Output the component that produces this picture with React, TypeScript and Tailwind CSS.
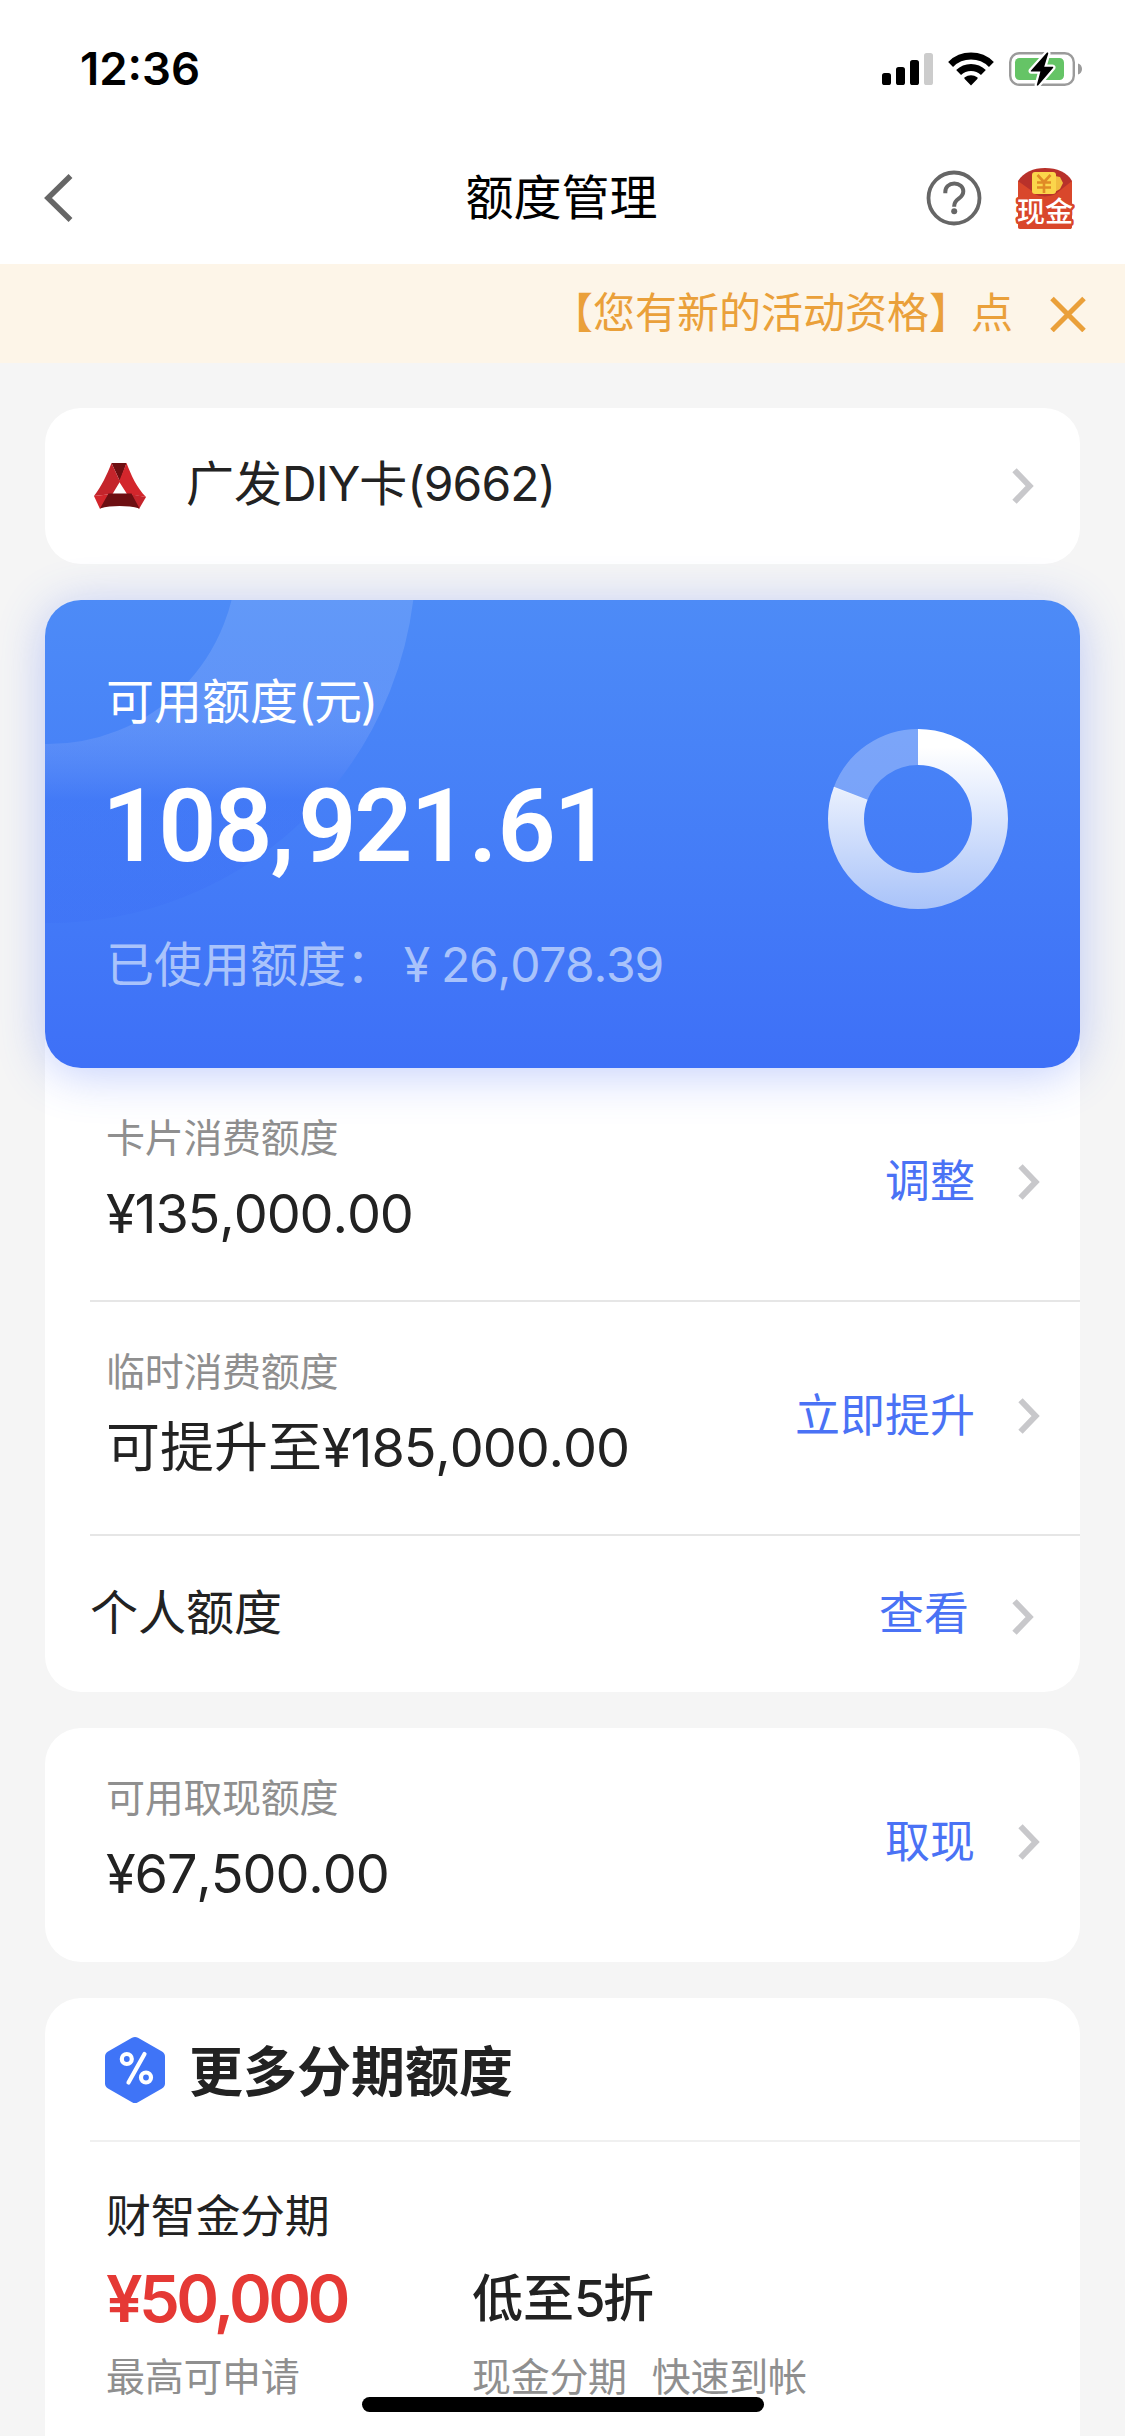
import type { ReactNode } from "react";

type LimitRowProps = {
  label: string;
  value: ReactNode;
  action: string;
  divider?: boolean;
};

const installment = {
  name: "财智金分期",
  amount: "¥50,000",
  amountNote: "最高可申请",
  rateNotes: ["现金分期", "快速到帐"]
};

function SignalIcon() {
  return (
    <svg width="51" height="32" viewBox="0 0 51 32">
      <rect x="0" y="20" width="9" height="12" rx="2.6" />
      <rect x="14" y="14" width="9" height="18" rx="2.6" />
      <rect x="28" y="7" width="9" height="25" rx="2.6" />
      <rect x="42" y="0" width="9" height="32" rx="2.6" fill="#cccccc" />
    </svg>
  );
}

function WifiIcon() {
  return (
    <svg width="46" height="34" viewBox="0 0 46 34">
      <g fill="none" stroke="#000" strokeWidth="7">
        <path d="M2.6 12.4a29.2 29.2 0 0 1 40.8 0" />
        <path d="M10.6 20.6a17.8 17.8 0 0 1 24.8 0" />
      </g>
      <path d="M23 33.4l-6.3-6.5c-.5-.6-.5-1.2.1-1.6a10 10 0 0 1 12.4 0c.6.4.6 1 .1 1.6z" />
    </svg>
  );
}

function BatteryIcon() {
  return (
    <svg width="74" height="36" viewBox="0 0 74 36">
      <rect x="1.2" y="2.2" width="63.6" height="31.6" rx="9" fill="none" stroke="#9b9b9b" strokeWidth="2.4" />
      <path d="M69 12.5c2.6.8 4 2.9 4 5.5s-1.4 4.7-4 5.5z" fill="#9b9b9b" />
      <rect x="6" y="7" width="49" height="22" rx="4.5" fill="#65c466" />
      <path
        d="M37.8 1.8L22 19.4c-.5.7-.2 1.2.5 1.2h8.9l-3.5 13c-.3 1.3.6 1.5 1.4.7L44 17.1c.6-.7.3-1.3-.5-1.3h-8.3l4-13c.3-1.3-.6-1.8-1.4-1z"
        stroke="#fff"
        strokeWidth="4.5"
        paintOrder="stroke"
      />
    </svg>
  );
}

function HelpIcon() {
  return (
    <svg width="56" height="56" viewBox="0 0 56 56" fill="none" stroke="#666666">
      <circle cx="28" cy="28" r="25.5" strokeWidth="3.8" />
      <path
        d="M19.3 23.2v-1.3c0-5 3.7-8.3 9-8.3 5.2 0 9 3.2 9 7.7 0 3.3-1.6 5.2-4.6 7.4-3.3 2.4-4.5 4-4.5 7.3v.8"
        strokeWidth="4"
      />
      <circle cx="28.2" cy="41.3" r="3" fill="#666666" stroke="none" />
    </svg>
  );
}

function CashIcon() {
  return (
    <svg width="60" height="62" viewBox="0 0 60 62">
      <path d="M3 14C9 5 18 1 30 1s22 4 27 13v22H3z" fill="#b8312a" />
      <path d="M40 9l5 1 3 6-3 6-7 4z" fill="#f2bd3f" />
      <path d="M3 14l14 10c3 7 21 7 26 1l14-11v46c0 1.5-1 2-2 2H5c-1.5 0-2-1-2-2z" fill="#d9472b" />
      <rect x="17" y="5" width="24" height="22" rx="3" fill="#fbd54b" />
      <path d="M22.5 8l6.5 7 6.5-7M29 15v11M22 15.5h14M22 20.5h14" fill="none" stroke="#e08a26" strokeWidth="2.6" />
      <text
        x="30"
        y="54.5"
        textAnchor="middle"
        className="font-['Noto_Sans_CJK_SC',sans-serif] text-[28px] font-medium"
        fill="#fff"
        stroke="#d9472b"
        strokeWidth="5"
        strokeLinejoin="round"
        paintOrder="stroke"
      >
        现金
      </text>
    </svg>
  );
}

function BankLogo() {
  return (
    <svg width="54" height="46" viewBox="0 0 54 46">
      <path d="M18.5 0h15L27 18.5z" fill="#6d0f12" />
      <path d="M18.5 0L27 18.5 19.5 31 1 33C8 24 14 12 18.5 0z" fill="#c4242b" />
      <path d="M33.5 0L26 18.5 34 31 53 34C44 25 38 12 33.5 0z" fill="#d3262c" />
      <path d="M1 33l18.5-2L7 46z" fill="#d3262c" />
      <path d="M33.5 30.5L53 34l-7 12z" fill="#c4242b" />
      <path d="M15.5 30.5h23L46.5 45.5C34 42.3 19 42.3 7 45.5z" fill="#6d0f12" />
    </svg>
  );
}

function PercentBadge() {
  return (
    <svg width="60" height="68" viewBox="0 0 60 68">
      <path
        d="M27 1.8q3-1.7 6 0l24 13.7q3 1.7 3 5.2v26.6q0 3.5-3 5.2L33 66.2q-3 1.7-6 0L3 52.5q-3-1.7-3-5.2V20.7q0-3.5 3-5.2z"
        fill="#3f74f7"
      />
      <g fill="none" stroke="#fff" strokeWidth="4.2">
        <circle cx="21.8" cy="23" r="5" />
        <circle cx="41" cy="41.5" r="5" />
        <path d="M39.5 18L23.5 46.5" strokeLinecap="round" />
      </g>
    </svg>
  );
}

function ChevronRight() {
  return (
    <svg width="22" height="36" viewBox="0 0 22 36" fill="none" className="shrink-0">
      <path d="M2.5 2.2L17.6 18 2.5 33.8" stroke="#c8c8cb" strokeWidth="6" />
    </svg>
  );
}

// Share of the limit that is still free, clockwise from 12 o'clock.
function LimitDonut({ free }: { free: number }) {
  const length = 2 * Math.PI * 72;
  return (
    <svg width="180" height="180" viewBox="0 0 180 180" fill="none">
      <defs>
        <linearGradient id="donut" gradientUnits="userSpaceOnUse" x1="0" y1="0" x2="0" y2="180">
          <stop offset="0.1" stopColor="#ffffff" />
          <stop offset="1" stopColor="#a9c3f9" />
        </linearGradient>
      </defs>
      <path
        d="M90 18a72 72 0 0 1 0 144a72 72 0 0 1 0-144"
        stroke="url(#donut)"
        strokeWidth="36"
        strokeDasharray={`${length * free} ${length}`}
      />
      <path
        d="M90 18a72 72 0 0 0 0 144a72 72 0 0 0 0-144"
        stroke="#ffffff"
        strokeOpacity="0.28"
        strokeWidth="36"
        strokeDasharray={`${length * (1 - free)} ${length}`}
      />
    </svg>
  );
}

function CardRings() {
  return (
    <svg width="420" height="468" viewBox="0 0 420 468" fill="none" className="absolute top-0 left-0">
      <defs>
        <linearGradient id="rings" gradientUnits="userSpaceOnUse" x1="0" y1="0" x2="0" y2="323">
          <stop offset="0" stopColor="#ffffff" stopOpacity="0.12" />
          <stop offset="0.25" stopColor="#ffffff" stopOpacity="0.12" />
          <stop offset="0.62" stopColor="#3a6cf5" stopOpacity="0.3" />
          <stop offset="1" stopColor="#3a6cf5" stopOpacity="0.25" />
        </linearGradient>
      </defs>
      <circle cx="3" cy="-45" r="278.5" stroke="url(#rings)" strokeWidth="179" />
    </svg>
  );
}

function LimitRow({ label, value, action, divider }: LimitRowProps) {
  return (
    <div
      className={`ml-[45px] flex h-[234px] justify-between pr-10 pl-4 ${divider ? "border-b-2 border-[#e6e6e6]" : ""}`}
    >
      <div className="pt-[46px]">
        <p className="text-[39px] leading-[48px] tracking-[-0.3px] text-[#8f8f8f]">{label}</p>
        <p className="mt-4 text-[54px] leading-[72px] tracking-[-0.021em] [font-kerning:none]">{value}</p>
      </div>
      <div className="flex h-[228px] items-center gap-[43px]">
        <span className="pb-0.5 text-[45px] leading-none text-[#4a72f5]">{action}</span>
        <ChevronRight />
      </div>
    </div>
  );
}

export default function App() {
  return (
    <div className="relative flex h-[2436px] w-[1125px] flex-col overflow-hidden bg-[#f5f5f5] font-['Inter','Noto_Sans_CJK_SC',sans-serif] text-[#222222]">
      <div className="flex h-[132px] shrink-0 items-center justify-between bg-white pt-1.5 pr-[42px] pl-20 text-black">
        <span className="text-[45.5px] leading-none font-semibold">12:36</span>
        <div className="flex items-center gap-[15px]">
          <SignalIcon />
          <WifiIcon />
          <BatteryIcon />
        </div>
      </div>

      <header className="grid h-[132px] shrink-0 grid-cols-3 items-center bg-white pr-[50px] pl-11 text-black">
        <svg width="30" height="48" viewBox="0 0 30 48" fill="none">
          <path d="M26.5 2L4 24l22.5 22" stroke="#666666" strokeWidth="5.5" />
        </svg>
        <h1 className="pl-1 text-center text-[48px] leading-none">额度管理</h1>
        <div className="flex items-center justify-end gap-[33px]">
          <HelpIcon />
          <CashIcon />
        </div>
      </header>

      <div className="flex h-[99px] shrink-0 items-center justify-end gap-[37px] bg-[#fdf5e8] pr-[39px] text-[#eaa03a]">
        <span className="pb-0.5 text-[42px] leading-none whitespace-nowrap">【您有新的活动资格】点</span>
        <svg width="36" height="36" viewBox="0 0 36 36">
          <path d="M2 2.5l32 32M34 2.5l-32 32" stroke="#eaa03a" strokeWidth="5" />
        </svg>
      </div>

      <main className="flex flex-col px-[45px] pt-[45px]">
        <section className="flex h-[156px] items-center rounded-[36px] bg-white pr-[46px] pl-[48px]">
          <BankLogo />
          <span className="ml-[39px] flex-1 pb-1 text-[48px] leading-none [font-kerning:none]">
            广发<span className="tracking-[-0.02em]">DIY</span>卡<span className="tracking-[-0.02em]">(9662)</span>
          </span>
          <ChevronRight />
        </section>

        <section className="relative z-10 mt-9 flex h-[468px] justify-between overflow-hidden rounded-[36px] bg-gradient-to-b from-[#4d8bf7] to-[#3e70f7] pr-[72px] pl-[61px] text-white shadow-[0_6px_48px_rgba(64,104,247,0.32)]">
          <CardRings />
          <div className="relative pt-[72px]">
            <p className="text-[48px] leading-[60px]">
              可用额度<span className="tracking-[-0.03em]">(元)</span>
            </p>
            <p className="mt-[34px] -ml-1 font-['Roboto','Liberation_Sans',sans-serif] text-[102px] leading-[120px] font-semibold tracking-[-0.021em]">
              108<span className="pr-1.5">,</span>921<span className="px-0.5">.</span>61
            </p>
            <p className="mt-[49px] flex text-[48px] leading-[60px] whitespace-nowrap text-[#a9c3fb]">
              已使用额度：<span className="w-[46px] text-center">¥</span>
              <span className="ml-px tracking-[-0.026em] [font-kerning:none]">26,078.39</span>
            </p>
          </div>
          <div className="relative pt-[129px]">
            <LimitDonut free={0.807} />
          </div>
        </section>

        <section className="-mt-9 rounded-b-[36px] bg-white pt-9">
          <LimitRow label="卡片消费额度" value="¥135,000.00" action="调整" divider />
          <LimitRow
            label="临时消费额度"
            value={
              <>
                <span className="tracking-normal">可提升至</span>¥185,000.00
              </>
            }
            action="立即提升"
            divider
          />
          <div className="flex h-[156px] items-center pr-[46px] pl-[45px]">
            <span className="flex-1 pb-[3px] text-[48px] leading-none">个人额度</span>
            <span className="pb-0.5 text-[45px] leading-none text-[#4a72f5]">查看</span>
            <span className="mt-1.5 ml-[43px]">
              <ChevronRight />
            </span>
          </div>
        </section>

        <section className="mt-9 rounded-[36px] bg-white">
          <LimitRow label="可用取现额度" value="¥67,500.00" action="取现" />
        </section>

        <section className="mt-9 h-[500px] rounded-t-[36px] bg-white pl-[45px]">
          <div className="flex h-36 items-center gap-6 border-b-2 border-[#f0f0f0] pl-[15px]">
            <span className="mt-0.5">
              <PercentBadge />
            </span>
            <h2 className="mt-2 text-[54px] leading-none font-bold">更多分期额度</h2>
          </div>
          <div className="pt-[45px] pl-4">
            <p className="text-[45px] leading-[60px] tracking-[-0.3px]">{installment.name}</p>
            <div className="mt-2.5 flex">
              <div className="w-[366px]">
                <p className="text-[65px] leading-[84px] font-semibold tracking-[-0.056em] text-[#e53935]">
                  {installment.amount}
                </p>
                <p className="mt-3 text-[39px] leading-[48px] tracking-[-0.3px] text-[#8f8f8f]">
                  {installment.amountNote}
                </p>
              </div>
              <div>
                <p className="text-[51px] leading-[84px] font-medium">
                  低至<span className="tracking-[-0.05em]">5</span>折
                </p>
                <p className="mt-3 flex gap-[25px] text-[39px] leading-[48px] tracking-[-0.3px] text-[#8f8f8f]">
                  {installment.rateNotes.map((note) => (
                    <span key={note}>{note}</span>
                  ))}
                </p>
              </div>
            </div>
          </div>
        </section>
      </main>

      {/* home indicator */}
      <div className="absolute bottom-6 left-[362px] z-20 h-[15px] w-[402px] rounded-full bg-black" />
    </div>
  );
}
